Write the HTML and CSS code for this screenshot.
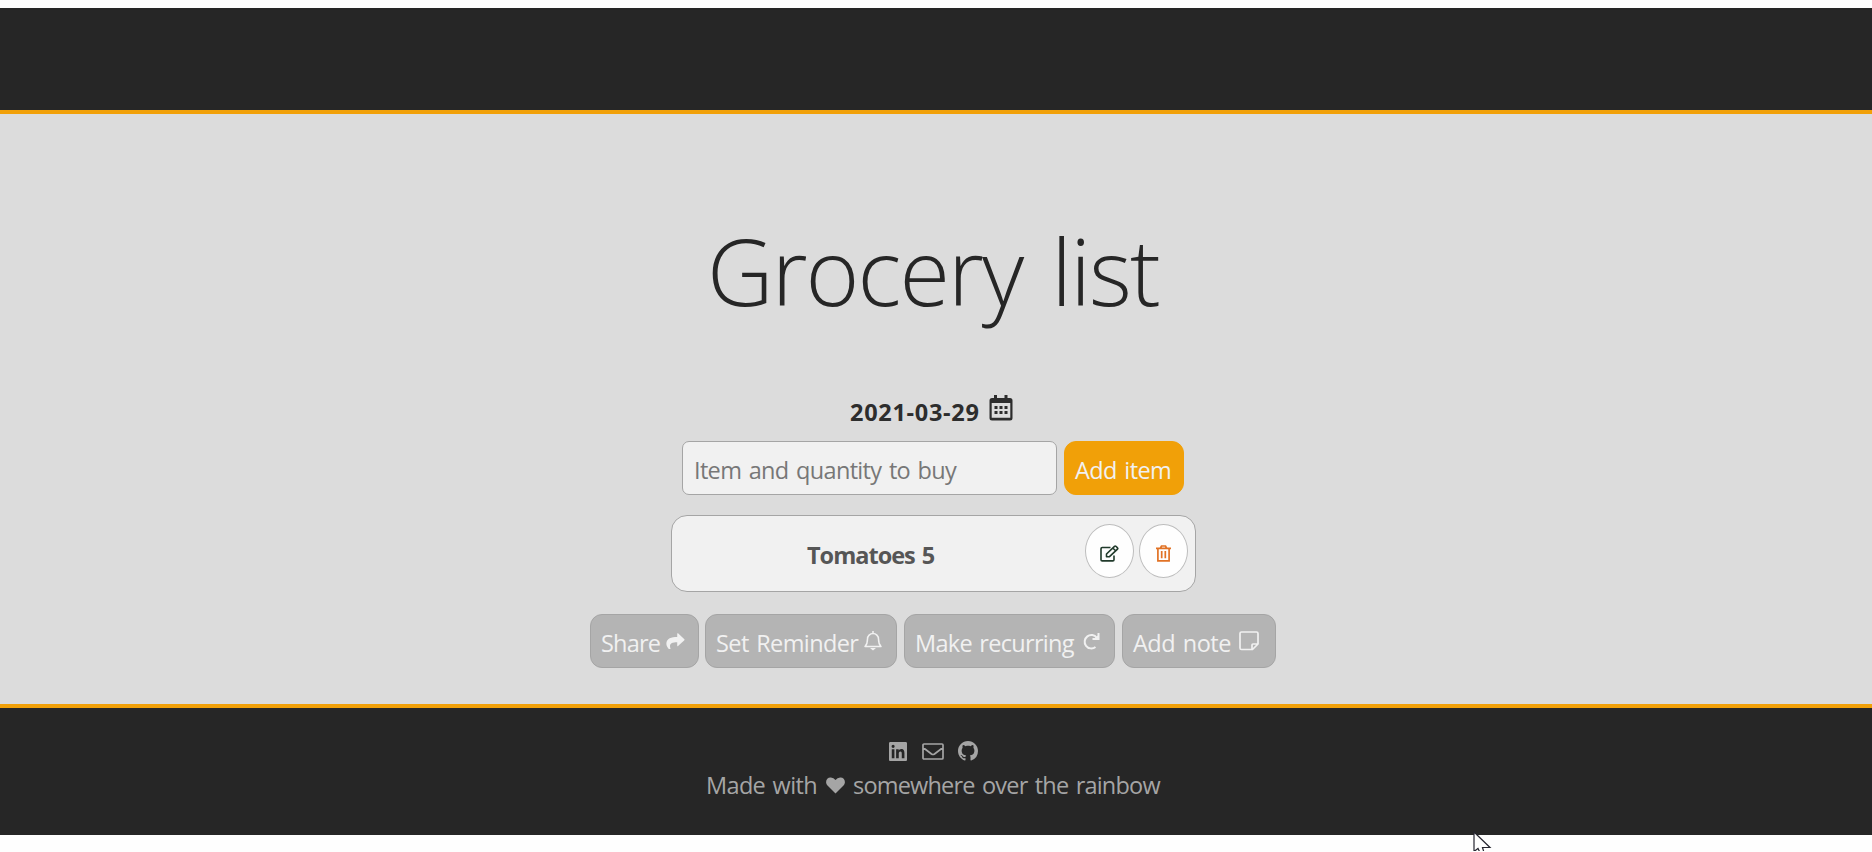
FILE: index.html
```html
<!DOCTYPE html>
<html lang="en">
<head>
<meta charset="utf-8">
<title>Grocery list</title>
<link rel="stylesheet" href="styles.css">
</head>
<body>
<header class="topbar"></header>
<main class="main">
  <h1 class="title"><span class="t">Grocery list</span></h1>
  <div class="date-row">
    <span class="t date">2021-03-29</span>
    <svg class="ico-cal" width="24" height="26" viewBox="0 0 24 26"><path fill="currentColor" fill-rule="evenodd" d="M5 0h3v3h7.500V0h3v3H21a2.500 2.500 0 0 1 2.500 2.500V23A2.500 2.500 0 0 1 21 25.500H3A2.500 2.500 0 0 1 .5 23V5.500A2.500 2.500 0 0 1 3 3h2zM2.700 8v14.800h18.600V8zM5.500 11h3v3h-3zm5 0h3v3h-3zm5 0h3v3h-3zm-10 5h3v3h-3zm5 0h3v3h-3zm5 0h3v3h-3z"/></svg>
  </div>
  <form class="add-row">
    <div class="field"><span class="t place">Item and quantity to buy</span></div>
    <button class="btn add" type="button"><span class="t add-t">Add item</span></button>
  </form>
  <div class="card">
    <span class="t item">Tomatoes 5</span>
    <div class="tools">
    <button class="round edit" type="button"><svg width="19" height="17" viewBox="0 0 19 17"><g fill="none" stroke="currentColor" stroke-width="1.600" stroke-linejoin="round"><path d="M10.500 2.500H2.200Q1 2.500 1 3.700V14.700Q1 15.900 2.200 15.900H12.800Q14 15.900 14 14.700V10.500"/><path d="M6.500 11.700V9L14.500 1.300Q15.200.7 15.900 1.300L17.500 2.900Q18.100 3.600 17.500 4.200L9.500 11.700ZM12.800 3L15.800 6"/></g></svg></button>
    <button class="round del" type="button"><svg width="15" height="17" viewBox="0 0 15 17"><g fill="none" stroke="currentColor" stroke-width="1.700"><path d="M0 3.300H15M4.500 3L5.500 1H9.500L10.500 3M1.900 3.300V15.900H13.100V3.300M5.700 6V13.300M9.300 6V13.300"/></g></svg></button>
    </div>
  </div>
  <div class="actions">
    <button class="btn share" type="button"><span class="t share-t">Share</span><svg width="19" height="16" viewBox="0 0 512 448"><path fill="currentColor" d="M504 176 328 10Q304-6 304 24V110C145 112 0 145 0 304c0 64 42 128 87 160 15 11 35-3 29-20C70 296 138 258 304 256V350Q306 378 328 362L504 200Q516 188 504 176Z"/></svg></button>
    <button class="btn remind" type="button"><span class="t remind-t">Set Reminder</span><svg width="18" height="20" viewBox="0 0 18 20"><path fill="none" stroke="currentColor" stroke-width="1.500" stroke-linejoin="round" d="M1 15.500Q3.500 13 3.500 8A5.500 5.500 0 0 1 14.500 8Q14.500 13 17 15.500ZM9 0V3"/><path fill="currentColor" d="M6 17H12L9 19.500Z"/></svg></button>
    <button class="btn recur" type="button"><span class="t recur-t">Make recurring</span><svg width="18" height="17" viewBox="0 0 18 17"><path fill="none" stroke="currentColor" stroke-width="2" d="M14.800 4.800A6.700 6.700 0 1 0 13.500 14"/><path fill="currentColor" d="M17.500 0V7H10.500V5H13L15.500 2.500V0Z"/></svg></button>
    <button class="btn note" type="button"><span class="t note-t">Add note</span><svg width="20" height="20" viewBox="0 0 20 20"><path fill="none" stroke="currentColor" stroke-width="1.700" stroke-linejoin="round" d="M2.500 1H17.500Q19 1 19 2.500V13L13.500 18.500H2.500Q1 18.500 1 17V2.500Q1 1 2.500 1ZM13 18V14Q13 13 14 13H18.500"/></svg></button>
  </div>
</main>
<footer class="footer">
  <div class="social">
    <svg width="18" height="19" viewBox="0 0 448 448" preserveAspectRatio="none"><path fill="currentColor" fill-rule="evenodd" d="M416 0H32C14 0 0 15 0 32v384c0 18 14 32 32 32h384c18 0 32-14 32-32V32c0-17-14-32-32-32zM135 384H69V170h66zm-33-243a38 38 0 1 1 0-77 38 38 0 0 1 0 77zm282 243h-66V280c0-25-1-57-35-57s-40 27-40 55v106h-66V170h64v29h1c9-17 30-35 62-35 67 0 80 44 80 102z"/></svg>
    <svg class="mail" width="22" height="17" viewBox="0 0 22 17"><path fill="none" stroke="currentColor" stroke-width="1.700" stroke-linejoin="round" d="M2 1H20Q21 1 21 2V15Q21 16 20 16H2Q1 16 1 15V2Q1 1 2 1ZM1 4.500L9.500 11Q11 12 12.500 11L21 4.500"/></svg>
    <svg class="gh" width="20" height="20" viewBox="0 0 16 16"><path fill="currentColor" d="M8 0C3.580 0 0 3.580 0 8c0 3.540 2.290 6.530 5.470 7.590.4.070.55-.17.55-.38 0-.19-.01-.82-.01-1.490-2.010.37-2.530-.49-2.690-.94-.09-.23-.48-.94-.82-1.130-.28-.15-.68-.52-.01-.53.63-.01 1.080.58 1.230.82.72 1.210 1.870.87 2.330.66.07-.52.28-.87.51-1.070-1.780-.2-3.640-.89-3.640-3.950 0-.87.31-1.590.82-2.150-.08-.2-.36-1.020.08-2.120 0 0 .67-.21 2.200.82.64-.18 1.320-.27 2-.27s1.360.09 2 .27c1.530-1.040 2.200-.82 2.200-.82.44 1.100.16 1.920.08 2.120.51.56.82 1.270.82 2.150 0 3.070-1.870 3.750-3.650 3.950.29.25.54.73.54 1.480 0 1.070-.01 1.930-.01 2.200 0 .21.15.46.55.38A8.010 8.010 0 0 0 16 8c0-4.420-3.580-8-8-8z"/></svg>
  </div>
  <p class="made"><span class="t made-a">Made with</span><svg width="19" height="17" viewBox="0 0 19 17"><path fill="currentColor" d="M9.500 16.500L1.500 8.500C-1.500 5 .7.500 4.500.5Q7.500.3 9.500 3Q11.500.3 14.500.5C18.300.5 20.500 5 17.500 8.500Z"/></svg><span class="t made-b">somewhere over the rainbow</span></p>
</footer>
<svg class="cursor" width="20" height="20" viewBox="0 0 20 20"><path fill="#fff" stroke="#25252f" stroke-width="1.200" d="M1 1V20.500L5 17.500L7 21.500H11L9.500 16.500H17Z"/></svg>
</body>
</html>
```
FILE: styles.css
```css
* { box-sizing: border-box; }
body { margin: 0; padding-top: 8px; height: 852px; overflow: hidden; background: #fefefe; font: 23.5px/32px "Open Sans", "Noto Sans", sans-serif; word-spacing: 2px; color: #262626; }
svg { display: block; flex: none; }
.t { display: block; white-space: nowrap; flex: none; }
.topbar { height: 106px; background: #262626; border-bottom: 4px solid #f1a008; }
.main { height: 590px; background: #dcdcdc; padding-top: 91px; display: flex; flex-direction: column; }
.title { margin: 0 0 0 707px; height: 133px; font-size: 92px; line-height: 132px; font-weight: 300; letter-spacing: -1.9px; word-spacing: 7px; }
.date-row { margin: 57px 0 0 850px; height: 32px; display: flex; color: #2d2d2d; font-weight: 700; letter-spacing: 0.7px; }
.date { width: 139px; padding-top: 1px; }
.add-row { margin: 14px 0 0 682px; display: flex; gap: 7px; }
.field { width: 375px; height: 54px; border: 1px solid #a5a5a5; border-radius: 7px; background: #f1f1f1; color: #777; padding: 12px 0 0 11px; letter-spacing: -0.66px; }
.btn { height: 54px; border: 1px solid #a5a5a5; border-radius: 12px; background: #b4b4b4; color: #f1f1f1; font: inherit; word-spacing: inherit; padding: 0 0 0 11px; display: flex; align-items: center; text-align: left; }
.btn .t { padding-top: 3px; }
.add { width: 120px; background: #f1a008; border-color: #f1a008; padding-left: 10px; letter-spacing: -0.6px; }
.card { margin: 20px 0 0 671px; width: 525px; height: 77px; border: 1px solid #a5a5a5; border-radius: 16px; background: #f1f1f1; display: flex; padding: 8px 7px 0 135px; color: #565656; font-weight: 700; }
.item { width: 278px; padding-top: 15px; letter-spacing: -1px; }
.tools { display: flex; gap: 5px; }
.round { width: 49px; height: 54px; border: 1px solid #bdbdbd; border-radius: 50%; background: #fefefe; padding: 4px 0 0; display: flex; align-items: center; justify-content: center; }
.edit { color: #203a2b; }
.del { color: #e17225; }
.actions { margin: 22px 0 0 590px; display: flex; }
.share { width: 109px; margin-right: 6px; padding-left: 10px; letter-spacing: -0.8px; }
.remind { width: 192px; margin-right: 7px; padding-left: 10px; letter-spacing: -0.6px; }
.recur { width: 211px; margin-right: 7px; padding-left: 10px; letter-spacing: -0.7px; }
.note { width: 154px; padding-left: 10px; letter-spacing: -0.5px; }
.share-t { width: 65px; }
.remind-t { width: 148px; }
.recur-t { width: 167px; }
.note-t { width: 106px; }
.note svg { margin-bottom: 1px; }
.footer { height: 131px; background: #262626; border-top: 4px solid #f1a008; color: #a5a5a5; padding-top: 33px; }
.social { display: flex; align-items: center; height: 20px; margin-left: 889px; }
.mail { margin-left: 15px; }
.gh { margin-left: 14px; }
.made { display: flex; margin: 8px 0 0 706px; }
.made svg { margin-top: 8px; }
.made-a { width: 120px; letter-spacing: -0.65px; }
.made-b { margin-left: 8px; letter-spacing: -0.8px; }
.cursor { position: absolute; left: 1473px; top: 831px; }
```
